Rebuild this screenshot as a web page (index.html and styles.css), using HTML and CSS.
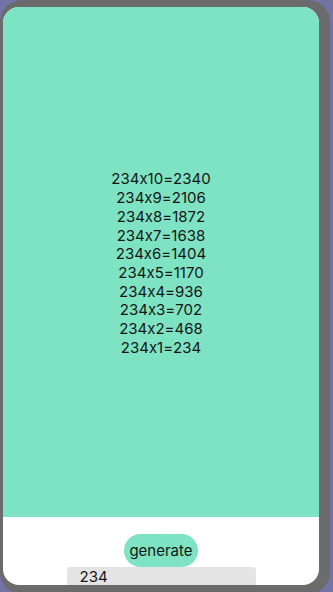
FILE: index.html
```html
<!DOCTYPE html>
<html>
<head>
<meta charset="utf-8">
<link rel="stylesheet" href="styles.css">
</head>
<body>
<div class="frame">
  <div class="screen">
    <div class="result">
      <div class="lines">
        <div>234x10=2340</div>
        <div>234x9=2106</div>
        <div>234x8=1872</div>
        <div>234x7=1638</div>
        <div>234x6=1404</div>
        <div>234x5=1170</div>
        <div>234x4=936</div>
        <div>234x3=702</div>
        <div>234x2=468</div>
        <div>234x1=234</div>
      </div>
    </div>
    <div class="controls">
      <div class="btn">generate</div>
      <div class="input">234</div>
    </div>
  </div>
</div>
</body>
</html>
```
FILE: styles.css
```css
html, body {
  margin: 0;
  padding: 0;
  background: #7373a6;
  width: 333px;
  height: 592px;
  overflow: hidden;
  font-family: Inter, "Liberation Sans", sans-serif;
  font-feature-settings: "calt" 0;
}
.frame {
  width: 330px;
  height: 594px;
  box-sizing: border-box;
  background: #6b6b6b;
  border-radius: 22px;
  padding: 7px 11px 9px 3px;
  display: flex;
}
.screen {
  flex: 1;
  background: #ffffff;
  border-radius: 16px;
  overflow: hidden;
  display: flex;
  flex-direction: column;
}
.result {
  flex: 1;
  background: #7de3c2;
  display: flex;
  align-items: center;
  justify-content: center;
}
.lines {
  text-align: center;
  font-size: 15px;
  line-height: 18.7px;
  color: #161616;
  padding-top: 4px;
}
.controls {
  height: 68px;
  flex-shrink: 0;
  display: flex;
  flex-direction: column;
  align-items: center;
}
.btn {
  margin-top: 17px;
  height: 33px;
  width: 74px;
  flex-shrink: 0;
  border-radius: 17px;
  background: #7de3c2;
  color: #161616;
  font-size: 15px;
  display: flex;
  align-items: center;
  justify-content: center;
}
.input {
  width: 189px;
  height: 22px;
  flex-shrink: 0;
  background: #e4e4e4;
  border-radius: 3px;
  box-sizing: border-box;
  padding-left: 13px;
  font-size: 15px;
  line-height: 20px;
  color: #161616;
}
```
